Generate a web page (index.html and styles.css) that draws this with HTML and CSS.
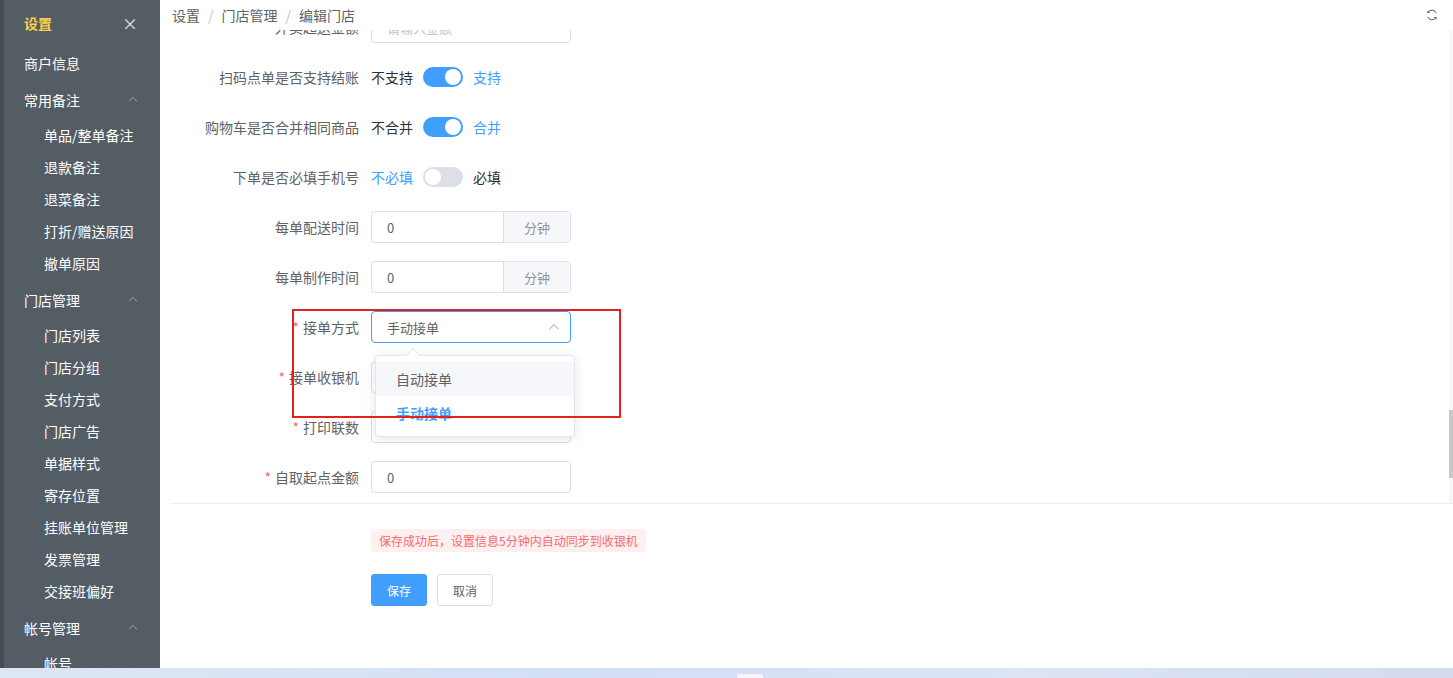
FILE: index.html
```html
<!DOCTYPE html>
<html lang="zh-CN">
<head>
  <meta charset="UTF-8">
  <title>编辑门店</title>
  <link rel="stylesheet" href="styles.css">
</head>
<body>
  <div class="app">
    <aside class="sidebar">
      <div class="side-title">
        <span class="side-name">设置</span>
        <span class="side-close">×</span>
      </div>
      <div class="menu-item">商户信息</div>
      <div class="menu-item">常用备注 <span class="chev"></span></div>
      <div class="sub-menu">
        <div class="sub-item">单品/整单备注</div>
        <div class="sub-item">退款备注</div>
        <div class="sub-item">退菜备注</div>
        <div class="sub-item">打折/赠送原因</div>
        <div class="sub-item">撤单原因</div>
      </div>
      <div class="menu-item">门店管理 <span class="chev"></span></div>
      <div class="sub-menu">
        <div class="sub-item">门店列表</div>
        <div class="sub-item">门店分组</div>
        <div class="sub-item">支付方式</div>
        <div class="sub-item">门店广告</div>
        <div class="sub-item">单据样式</div>
        <div class="sub-item">寄存位置</div>
        <div class="sub-item">挂账单位管理</div>
        <div class="sub-item">发票管理</div>
        <div class="sub-item">交接班偏好</div>
      </div>
      <div class="menu-item">帐号管理 <span class="chev"></span></div>
      <div class="sub-menu">
        <div class="sub-item">帐号</div>
      </div>
    </aside>

    <main class="main">
      <div class="header">
        <div class="crumb">
          <span>设置</span><span class="sep">/</span><span>门店管理</span><span class="sep">/</span><span class="crumb-last">编辑门店</span>
        </div>
        <svg class="refresh" width="12" height="12" viewBox="0 0 12 12">
          <path d="M10.2 4.2A4.4 4.4 0 0 0 2.3 3.2" fill="none" stroke="#555" stroke-width="1"/>
          <path d="M1.8 7.8A4.4 4.4 0 0 0 9.7 8.8" fill="none" stroke="#555" stroke-width="1"/>
          <path d="M1.2 1.4L1.6 4.2L4.2 3.6Z" fill="#555"/>
          <path d="M10.8 10.6L10.4 7.8L7.8 8.4Z" fill="#555"/>
        </svg>
      </div>

      <div class="scroll-area">
        <div class="form">
          <div class="form-row">
            <label class="form-label">外卖起送金额</label>
            <div class="input"><span class="placeholder">请输入金额</span></div>
          </div>
          <div class="form-row">
            <label class="form-label">扫码点单是否支持结账</label>
            <div class="switch-line">
              <span>不支持</span><span class="switch on"></span><span class="active">支持</span>
            </div>
          </div>
          <div class="form-row">
            <label class="form-label">购物车是否合并相同商品</label>
            <div class="switch-line">
              <span>不合并</span><span class="switch on"></span><span class="active">合并</span>
            </div>
          </div>
          <div class="form-row">
            <label class="form-label">下单是否必填手机号</label>
            <div class="switch-line">
              <span class="active">不必填</span><span class="switch"></span><span>必填</span>
            </div>
          </div>
          <div class="form-row">
            <label class="form-label">每单配送时间</label>
            <div class="input group"><span class="value">0</span><span class="append">分钟</span></div>
          </div>
          <div class="form-row">
            <label class="form-label">每单制作时间</label>
            <div class="input group"><span class="value">0</span><span class="append">分钟</span></div>
          </div>
          <div class="form-row">
            <label class="form-label"><i class="req">*</i>接单方式</label>
            <div class="select-wrap">
              <div class="input focus">
                <span class="value">手动接单</span>
                <svg class="arrow" width="12" height="12" viewBox="0 0 12 12">
                  <path d="M1.5 8L6 3.5L10.5 8" fill="none" stroke="#c0c4cc" stroke-width="1.2"/>
                </svg>
              </div>
              <div class="dropdown">
                <span class="drop-arrow"></span>
                <div class="drop-item hover">自动接单</div>
                <div class="drop-item selected">手动接单</div>
              </div>
            </div>
          </div>
          <div class="form-row">
            <label class="form-label"><i class="req">*</i>接单收银机</label>
            <div class="input"></div>
          </div>
          <div class="form-row">
            <label class="form-label"><i class="req">*</i>打印联数</label>
            <div class="input"></div>
          </div>
          <div class="form-row">
            <label class="form-label"><i class="req">*</i>自取起点金额</label>
            <div class="input"><span class="value">0</span></div>
          </div>
        </div>
        <div class="scrollbar"><div class="thumb"></div></div>
      </div>

      <div class="footer">
        <div class="tip">保存成功后，设置信息5分钟内自动同步到收银机</div>
        <div class="buttons">
          <button class="btn primary">保存</button>
          <button class="btn">取消</button>
        </div>
      </div>

      <div class="mark"></div>
    </main>
  </div>
  <div class="taskbar"><span class="task-pill"></span></div>
</body>
</html>
```

FILE: styles.css
```css
* {
  margin: 0;
  padding: 0;
  box-sizing: border-box;
}

body {
  font-family: "Noto Sans CJK SC", "Noto Sans", sans-serif;
  font-size: 14px;
  background: #dbe4f3;
  overflow: hidden;
}

.app {
  display: flex;
  height: 668px;
}

/* sidebar */
.sidebar {
  width: 160px;
  flex-shrink: 0;
  background: #545c64;
  border-left: 4px solid #464c53;
  color: #fff;
  overflow: hidden;
}

.side-title {
  height: 45px;
  display: flex;
  align-items: center;
  justify-content: space-between;
  padding: 0 22px 0 20px;
}

.side-name {
  color: #ffd04b;
  font-weight: bold;
}

.side-close {
  font-size: 16px;
  color: #e6e6e6;
}

.menu-item {
  height: 37px;
  line-height: 37px;
  padding-left: 20px;
  position: relative;
}

.chev {
  position: absolute;
  left: 126px;
  top: 16px;
  width: 6px;
  height: 6px;
  border-left: 1px solid #8a9098;
  border-top: 1px solid #8a9098;
  transform: rotate(45deg);
}

.sub-menu {
  padding-bottom: 3px;
}

.sub-item {
  height: 32px;
  line-height: 32px;
  padding-left: 40px;
}

/* main */
.main {
  flex: 1;
  background: #fff;
  display: flex;
  flex-direction: column;
  position: relative;
  color: #606266;
}

.header {
  height: 30px;
  display: flex;
  align-items: center;
  justify-content: space-between;
  padding: 0 15px 0 12px;
}

.crumb span {
  color: #606266;
}

.crumb .sep {
  color: #c0c4cc;
  margin: 0 8px;
}

.scroll-area {
  height: 473px;
  overflow: hidden;
  position: relative;
  margin-left: 10px;
}

.form {
  margin-top: -19px;
}

.form-row {
  display: flex;
  align-items: center;
  height: 32px;
  margin-bottom: 18px;
}

.form-label {
  width: 201px;
  padding-right: 12px;
  text-align: right;
  color: #606266;
  line-height: 32px;
}

.req {
  font-style: normal;
  color: #f56c6c;
  margin-right: 4px;
}

.switch-line {
  display: flex;
  align-items: center;
  gap: 10px;
  color: #303133;
}

.switch-line .active {
  color: #409eff;
}

.switch {
  width: 40px;
  height: 20px;
  border-radius: 10px;
  background: #dcdfe6;
  position: relative;
}

.switch::after {
  content: "";
  position: absolute;
  top: 2px;
  left: 2px;
  width: 16px;
  height: 16px;
  border-radius: 50%;
  background: #fff;
}

.switch.on {
  background: #409eff;
}

.switch.on::after {
  left: 22px;
}

.input {
  width: 200px;
  height: 32px;
  border: 1px solid #dcdfe6;
  border-radius: 4px;
  display: flex;
  align-items: center;
  padding-left: 15px;
  font-size: 13px;
  color: #606266;
  background: #fff;
}

.input.focus {
  border-color: #409eff;
  justify-content: space-between;
  padding-right: 10px;
}

.placeholder {
  color: #c0c4cc;
}

.input.group {
  padding-left: 0;
  overflow: hidden;
}

.input.group .value {
  flex: 1;
  padding-left: 15px;
}

.append {
  width: 67px;
  height: 100%;
  background: #f5f7fa;
  border-left: 1px solid #dcdfe6;
  color: #909399;
  display: flex;
  align-items: center;
  justify-content: center;
}

.select-wrap {
  position: relative;
}

.dropdown {
  position: absolute;
  top: 44px;
  left: 4px;
  width: 200px;
  padding: 6px 0;
  background: #fff;
  border: 1px solid #e4e7ed;
  border-radius: 4px;
  box-shadow: 0 2px 12px rgba(0, 0, 0, 0.1);
  z-index: 5;
}

.drop-arrow {
  position: absolute;
  top: -6px;
  left: 32px;
  width: 10px;
  height: 10px;
  background: #fff;
  border-left: 1px solid #e4e7ed;
  border-top: 1px solid #e4e7ed;
  transform: rotate(45deg);
}

.drop-item {
  height: 34px;
  line-height: 34px;
  padding: 0 20px;
  color: #606266;
  position: relative;
}

.drop-item.hover {
  background: #f5f7fa;
}

.drop-item.selected {
  color: #409eff;
  font-weight: bold;
}

.scrollbar {
  position: absolute;
  right: 0;
  top: 0;
  width: 4px;
  height: 100%;
  background: #f7f7f7;
}

.thumb {
  margin-top: 380px;
  height: 68px;
  background: #c8c8c8;
}

.footer {
  margin-left: 10px;
  border-top: 1px solid #ebeef5;
  padding: 25px 0 0 201px;
}

.tip {
  display: inline-block;
  background: #fef0f0;
  color: #f56c6c;
  font-size: 12px;
  line-height: 23px;
  padding: 0 8px;
  border-radius: 4px;
}

.buttons {
  margin-top: 22px;
  display: flex;
  gap: 10px;
}

.btn {
  font-family: inherit;
  font-size: 12px;
  width: 56px;
  height: 32px;
  border: 1px solid #dcdfe6;
  border-radius: 3px;
  background: #fff;
  color: #606266;
}

.btn.primary {
  background: #409eff;
  border-color: #409eff;
  color: #fff;
}

/* annotation box drawn over the screenshot */
.mark {
  position: absolute;
  left: 132px;
  top: 309px;
  width: 329px;
  height: 109px;
  border: 2px solid #e3211f;
  z-index: 10;
  pointer-events: none;
}

.taskbar {
  height: 10px;
  background: linear-gradient(90deg, #dce6f4, #d3dff6 40%, #dbe3f5 70%, #d4dbef);
  position: relative;
}

.task-pill {
  position: absolute;
  left: 737px;
  top: 6px;
  width: 26px;
  height: 4px;
  background: #f4f6fb;
  border-radius: 3px 3px 0 0;
}
```
